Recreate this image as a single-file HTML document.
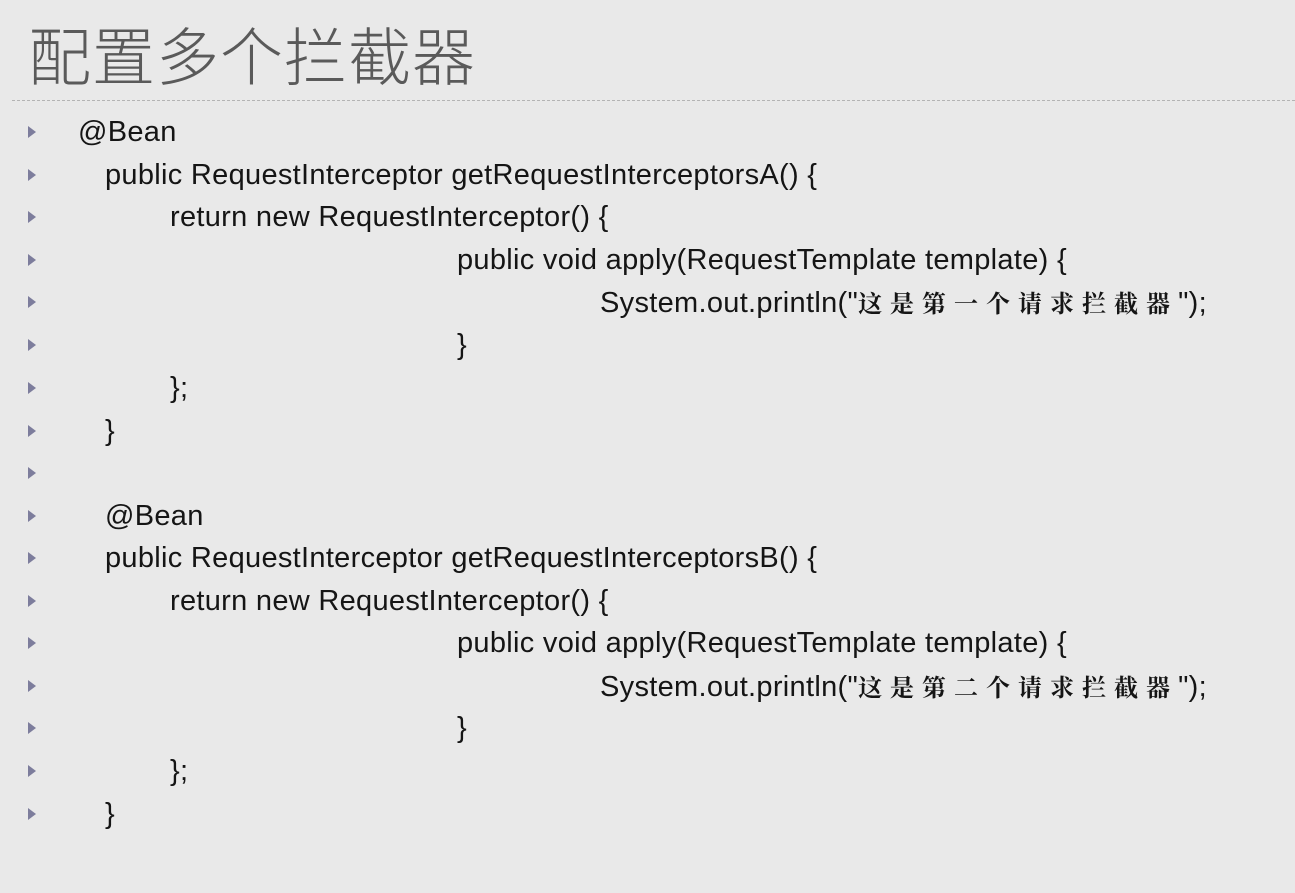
<!DOCTYPE html>
<html><head><meta charset="utf-8"><style>
html,body{margin:0;padding:0;}
body{width:1295px;height:893px;background:#e9e9e9;position:relative;overflow:hidden;font-family:"Liberation Sans","Noto Sans CJK SC",sans-serif;}
.title{position:absolute;left:28px;top:14px;font-size:63px;color:#5a5a5a;font-family:"Noto Sans CJK SC",sans-serif;font-weight:300;letter-spacing:1px;line-height:80px;}
.rule{position:absolute;left:12px;right:0;top:100px;border-top:1px dashed #b4b4b4;}
.l{position:absolute;font-size:29px;color:#151515;letter-spacing:0.3px;line-height:34px;white-space:pre;}
.t{position:absolute;left:28px;width:0;height:0;border-top:6px solid transparent;border-bottom:6px solid transparent;border-left:8px solid #7d7d9c;}
.cn{font-family:"Noto Serif CJK SC",serif;font-weight:bold;letter-spacing:8px;font-size:24px;}
</style></head><body>
<div class="title">配置多个拦截器</div>
<div class="rule"></div>

<div class="t" style="top:126px"></div><div class="l" style="left:78px;top:115px">@Bean</div>
<div class="t" style="top:169px"></div><div class="l" style="left:105px;top:158px">public RequestInterceptor getRequestInterceptorsA() {</div>
<div class="t" style="top:211px"></div><div class="l" style="left:170px;top:200px">return new RequestInterceptor() {</div>
<div class="t" style="top:254px"></div><div class="l" style="left:457px;top:243px">public void apply(RequestTemplate template) {</div>
<div class="t" style="top:296px"></div><div class="l" style="left:600px;top:285px">System.out.println("<span class="cn">这是第一个请求拦截器</span>");</div>
<div class="t" style="top:339px"></div><div class="l" style="left:457px;top:328px">}</div>
<div class="t" style="top:382px"></div><div class="l" style="left:170px;top:371px">};</div>
<div class="t" style="top:425px"></div><div class="l" style="left:105px;top:414px">}</div>
<div class="t" style="top:467px"></div>
<div class="t" style="top:510px"></div><div class="l" style="left:105px;top:499px">@Bean</div>
<div class="t" style="top:552px"></div><div class="l" style="left:105px;top:541px">public RequestInterceptor getRequestInterceptorsB() {</div>
<div class="t" style="top:595px"></div><div class="l" style="left:170px;top:584px">return new RequestInterceptor() {</div>
<div class="t" style="top:637px"></div><div class="l" style="left:457px;top:626px">public void apply(RequestTemplate template) {</div>
<div class="t" style="top:680px"></div><div class="l" style="left:600px;top:669px">System.out.println("<span class="cn">这是第二个请求拦截器</span>");</div>
<div class="t" style="top:722px"></div><div class="l" style="left:457px;top:711px">}</div>
<div class="t" style="top:765px"></div><div class="l" style="left:170px;top:754px">};</div>
<div class="t" style="top:808px"></div><div class="l" style="left:105px;top:797px">}</div>
</body></html>
